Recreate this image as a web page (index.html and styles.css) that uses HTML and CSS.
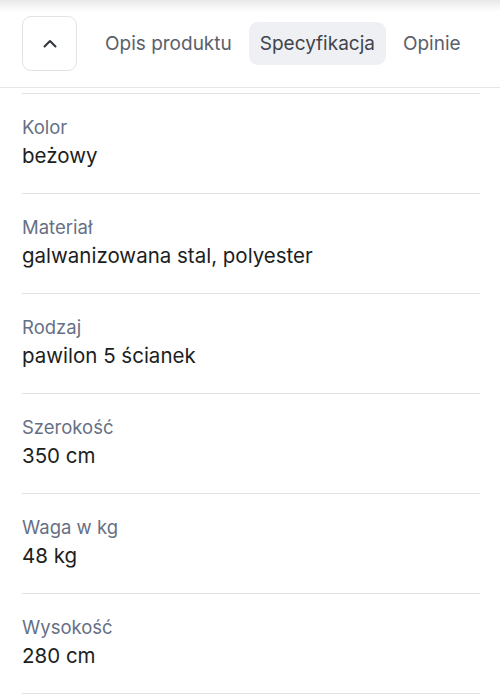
FILE: index.html
```html
<!DOCTYPE html>
<html lang="pl">
<head>
    <meta charset="UTF-8">
    <meta name="viewport" content="width=device-width, initial-scale=1.0">
    <title>Specyfikacja</title>
    <link rel="stylesheet" href="styles.css">
</head>
<body>
    <div class="tabs">
        <button class="up">
            <svg width="14" height="9" viewBox="0 0 14 9"><path d="M1.5 7.5 L7 2 L12.5 7.5" fill="none" stroke="#2f333a" stroke-width="2" stroke-linecap="round" stroke-linejoin="round"/></svg>
        </button>
        <span class="tab">Opis produktu</span>
        <span class="tab active">Specyfikacja</span>
        <span class="tab">Opinie</span>
    </div>
    <div class="specs">
        <div class="row">
            <p class="label">Kolor</p>
            <p class="value">beżowy</p>
        </div>
        <div class="row">
            <p class="label">Materiał</p>
            <p class="value">galwanizowana stal, polyester</p>
        </div>
        <div class="row">
            <p class="label">Rodzaj</p>
            <p class="value">pawilon 5 ścianek</p>
        </div>
        <div class="row">
            <p class="label">Szerokość</p>
            <p class="value">350 cm</p>
        </div>
        <div class="row">
            <p class="label">Waga w kg</p>
            <p class="value">48 kg</p>
        </div>
        <div class="row">
            <p class="label">Wysokość</p>
            <p class="value">280 cm</p>
        </div>
    </div>
</body>
</html>
```

FILE: styles.css
```css
*{
    padding: 0;
    margin: 0;
    box-sizing: border-box;
    font-family: Inter, 'Noto Sans', sans-serif;
}
body{
    background: #fff;
    width: 500px;
    overflow: hidden;
}
.tabs{
    height: 88px;
    display: flex;
    align-items: center;
    gap: 6px;
    padding: 0 22px;
    border-bottom: 1px solid #e6e6e6;
    background: linear-gradient(180deg, #e9e9e9 0px, #fff 12px);
}
.up{
    width: 55px;
    height: 55px;
    border: 1px solid #e3e3e3;
    border-radius: 9px;
    background: #fff;
    display: flex;
    align-items: center;
    justify-content: center;
    margin-right: 11px;
}
.tab{
    font-size: 19px;
    color: #5a606b;
    padding: 0 11px;
    height: 43px;
    line-height: 43px;
    border-radius: 9px;
}
.tab.active{
    background: #eef0f3;
    color: #3f444c;
}
.specs{
    padding: 5px 20px 0 22px;
}
.row{
    border-top: 1px solid #e3e3e3;
    padding: 20px 0 21px;
}
.row:last-child{
    border-bottom: 1px solid #e3e3e3;
}
.label{
    font-size: 18.5px;
    line-height: 26px;
    color: #667085;
}
.value{
    font-size: 20.5px;
    line-height: 32px;
    color: #1c1e21;
}
```
